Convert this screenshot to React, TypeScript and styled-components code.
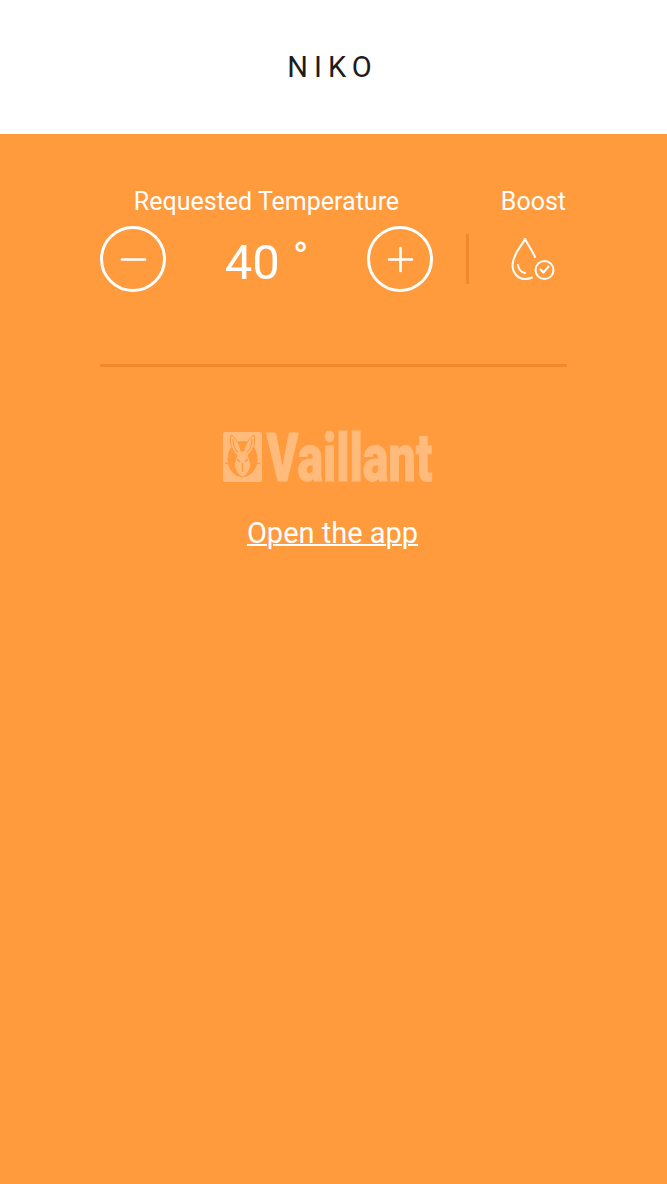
import { createGlobalStyle, styled } from 'styled-components';

const GlobalStyle = createGlobalStyle`
    html, body {
        margin: 0;
        padding: 0;
        background: #ff9a3d;
        font-family: Roboto, "Liberation Sans", sans-serif;
    }
`;

const Page = styled.div`
    display: flex;
    flex-direction: column;
    width: 667px;
    height: 1184px;
    overflow: hidden;
`;

const Header = styled.header`
    display: flex;
    justify-content: center;
    align-items: center;
    flex: 0 0 134px;
    padding-right: 2px;
    box-sizing: border-box;
    background: #fff;
    color: #1c1c1c;
    font-size: 29px;
    font-weight: 400;
    letter-spacing: 6px;
`;

const Main = styled.main`
    display: flex;
    flex-direction: column;
    flex: 1;
    padding: 54px 100px 0;
    background: #ff9a3d;
    color: #fff;
`;

const Controls = styled.section`
    display: flex;
    align-items: flex-start;
    height: 176px;
    border-bottom: 3px solid #f0882c;
`;

const TempGroup = styled.div`
    display: flex;
    flex-direction: column;
    width: 333px;
`;

const BoostGroup = styled.div`
    display: flex;
    flex-direction: column;
    align-items: flex-end;
    flex: 1;
    padding-right: 1px;
`;

const Label = styled.div`
    height: 26px;
    font-size: 25px;
    line-height: 28px;
    text-align: center;
`;

const Stepper = styled.div`
    display: flex;
    justify-content: space-between;
    align-items: flex-start;
    margin-top: 12px;
`;

const RoundButton = styled.button`
    display: flex;
    justify-content: center;
    align-items: center;
    width: 66px;
    height: 66px;
    padding: 0;
    background: none;
    border: 3px solid #fff;
    border-radius: 50%;
    box-sizing: border-box;
`;

const Value = styled.div`
    padding-top: 8px;
    font-size: 49px;
    line-height: 58px;
    white-space: pre;
`;

const Degree = styled.span`
    margin-left: 1px;
    font-size: 41px;
    line-height: 0;
    vertical-align: 8px;
`;

const BoostRow = styled.div`
    display: flex;
    align-items: center;
    justify-content: space-between;
    align-self: stretch;
    height: 50px;
    margin-top: 20px;
    padding-left: 33px;
`;

const Divider = styled.div`
    width: 3px;
    height: 50px;
    background: #f0882c;
`;

const BoostIcon = styled.svg`
    width: 44px;
    height: 44px;
    margin-right: 11px;
    margin-top: 2px;
`;

const Brand = styled.section`
    display: flex;
    flex-direction: column;
    align-items: center;
    padding-top: 65px;
    padding-right: 11px;
`;

const Logo = styled.svg`
    display: block;
    width: 211px;
    height: 51px;
    overflow: visible;
`;

const OpenLink = styled.a`
    margin-top: 33px;
    margin-left: 9px;
    color: #fff;
    font-size: 29px;
    line-height: 34px;
    text-decoration: underline;
    text-decoration-thickness: 2px;
`;

export default function App() {
    return (
        <Page>
            <GlobalStyle />
            <Header>NIKO</Header>
            <Main>
                <Controls>
                    <TempGroup>
                        <Label>Requested Temperature</Label>
                        <Stepper>
                            <RoundButton aria-label="Decrease">
                                <svg width="27" height="27" viewBox="0 0 27 27">
                                    <path d="M2 13.5h23" stroke="#fff" strokeWidth="2.6" strokeLinecap="round" />
                                </svg>
                            </RoundButton>
                            <Value>40 <Degree>°</Degree></Value>
                            <RoundButton aria-label="Increase">
                                <svg width="27" height="27" viewBox="0 0 27 27">
                                    <path d="M2 13.5h23M13.5 2v23" stroke="#fff" strokeWidth="2.6" strokeLinecap="round" />
                                </svg>
                            </RoundButton>
                        </Stepper>
                    </TempGroup>
                    <BoostGroup>
                        <Label>Boost</Label>
                        <BoostRow>
                            <Divider />
                            <BoostIcon viewBox="0 0 44 44" fill="none" stroke="#fff" strokeWidth="2" strokeLinecap="round" strokeLinejoin="round">
                                <path d="M14 1 C11 8 2 15 1.5 27 C1.5 35 7 41 14 41 C17 41 19 40.5 21 39.5" />
                                <path d="M14 1 C17 7 21 12 24 19" />
                                <path d="M7 27 C7.5 31 10 34 14 35" />
                                <circle cx="33.5" cy="32" r="9" />
                                <path d="M29.5 31.5 L32.5 34.5 L37.5 28.5" />
                            </BoostIcon>
                        </BoostRow>
                    </BoostGroup>
                </Controls>
                <Brand>
                    <Logo viewBox="0 0 211 51">
                        <rect x="0" y="0" width="39" height="50" rx="2" fill="#ffbb7c" />
                        <ellipse cx="19.5" cy="27" rx="15" ry="18" fill="#ff9a3d" />
                        <path d="M8 3 C6 11 9 19 14 23 L11 32 C12 39 16 44 19.5 45 C23 44 27 39 28 32 L25 23 C30 19 33 11 31 3 C26 6 22 13 21 19 L18 19 C17 13 13 6 8 3 Z" fill="#ffbb7c" stroke="#ff9a3d" strokeWidth="1" />
                        <path d="M10 7 C10 13 12 18 15 20 M29 7 C29 13 27 18 24 20" stroke="#ff9a3d" strokeWidth="1.2" fill="none" />
                        <path d="M2 31 L12 33 M37 31 L27 33 M14 27 l3 3 M25 27 l-3 3 M19.5 31 v9" stroke="#ff9a3d" strokeWidth="1.5" fill="none" />
                        <text x="41.5" y="34.6" transform="scale(1.05 1.43)" fill="#ffbb7c" stroke="#ffbb7c" strokeWidth="0.7" strokeLinejoin="round" fontFamily="Roboto, sans-serif" fontWeight="900" fontSize="46">Vaillant</text>
                    </Logo>
                    <OpenLink href="#">Open the app</OpenLink>
                </Brand>
            </Main>
        </Page>
    );
}
